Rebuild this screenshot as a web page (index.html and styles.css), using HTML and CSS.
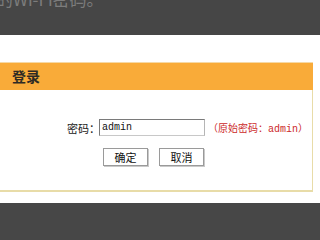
FILE: index.html
```html
<!DOCTYPE html>
<html lang="zh-CN">
<head>
  <meta charset="UTF-8">
  <title>登录</title>
  <link rel="stylesheet" href="styles.css">
</head>
<body>
  <div class="top-bar">
    <p class="top-text">的Wi-Fi密码。</p>
  </div>

  <div class="page">
    <div class="panel">
      <div class="panel-header">登录</div>
      <div class="panel-body">
        <div class="row">
          <label class="label" for="pwd">密码：</label>
          <input id="pwd" class="pwd-input" type="text" value="admin">
          <span class="hint">（原始密码：<span class="mono">admin</span>）</span>
        </div>
        <div class="buttons">
          <button class="btn">确定</button>
          <button class="btn">取消</button>
        </div>
      </div>
    </div>
  </div>

  <div class="bottom-bar"></div>
</body>
</html>
```

FILE: styles.css
```css
body {
    margin: 0;
    background: #474747;
    font-family: "Noto Sans CJK SC", "Liberation Sans", sans-serif;
    overflow: hidden;
}
.top-bar {
    height: 35px;
    background: #464646;
    overflow: hidden;
}
.top-text {
    margin: -11px 0 0 -4px;
    font-size: 17px;
    line-height: 20px;
    color: #7c7c7c;
}
.page {
    background: #fff;
    padding: 27px 0 11px 0;
}
.panel {
    width: 313px;
}
.panel-header {
    height: 27px;
    background: #f9ab39;
    border-top: 1px solid #f6d9a6;
    padding-left: 12px;
    font-size: 14px;
    font-weight: bold;
    line-height: 27px;
    color: #2e2a24;
}
.panel-body {
    height: 100px;
    border-right: 1px solid #e8dca8;
    border-bottom: 2px solid #e8dca8;
}
.row {
    display: flex;
    align-items: center;
    padding: 29px 0 0 67px;
    height: 17px;
}
.label {
    font-size: 11px;
    color: #222;
    margin-right: -1px;
}
.pwd-input {
    width: 100px;
    height: 13px;
    padding: 1px 2px;
    border: 1px solid #7a7a7a;
    border-right-color: #b5b5b5;
    border-bottom-color: #c8c8c8;
    font-family: "Liberation Mono", monospace;
    font-size: 10px;
    color: #111;
    outline: none;
}
.hint {
    margin-left: 3px;
    font-size: 10px;
    color: #cc2a2a;
}
.mono {
    font-family: "Liberation Mono", monospace;
}
.buttons {
    display: flex;
    gap: 11px;
    padding: 12px 0 0 103px;
}
.btn {
    width: 45px;
    height: 18px;
    padding: 0;
    border: 1px solid #9a9a9a;
    background: #fff;
    box-shadow: 1px 1px 0 #c9c9c9;
    font-family: "Noto Sans CJK SC", sans-serif;
    font-size: 11px;
    line-height: 16px;
    color: #111;
}
.bottom-bar {
    height: 40px;
    background: #474747;
}
```
